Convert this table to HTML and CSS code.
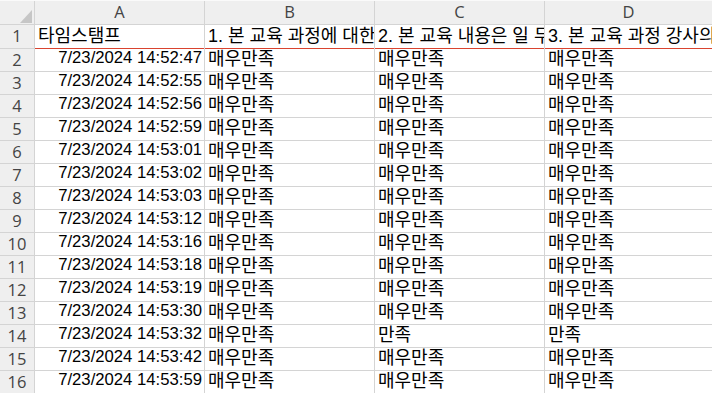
FILE: index.html
```html
<!DOCTYPE html>
<html lang="ko">
<head>
<meta charset="utf-8">
<title>Sheet</title>
<link rel="stylesheet" href="styles.css">
</head>
<body>
<div class="sheet">
  <div class="corner"><svg class="tri" width="12" height="13" viewBox="0 0 12 13"><polygon points="12,0 12,13 0,13" fill="#c6c6c6"/></svg></div>
  <div class="colhead">A</div>
  <div class="colhead">B</div>
  <div class="colhead">C</div>
  <div class="colhead">D</div>

  <div class="rowhead">1</div>
  <div class="cell first">타임스탬프</div>
  <div class="cell first">1. 본 교육 과정에 대한 전반적인 만족도는?</div>
  <div class="cell first">2. 본 교육 내용은 일 무엇보다 도움이 되었습니까?</div>
  <div class="cell first">3. 본 교육 과정 강사의 강의 만족도는?</div>

  <div class="rowhead">2</div><div class="cell num">7/23/2024 14:52:47</div><div class="cell">매우만족</div><div class="cell">매우만족</div><div class="cell">매우만족</div>
  <div class="rowhead">3</div><div class="cell num">7/23/2024 14:52:55</div><div class="cell">매우만족</div><div class="cell">매우만족</div><div class="cell">매우만족</div>
  <div class="rowhead">4</div><div class="cell num">7/23/2024 14:52:56</div><div class="cell">매우만족</div><div class="cell">매우만족</div><div class="cell">매우만족</div>
  <div class="rowhead">5</div><div class="cell num">7/23/2024 14:52:59</div><div class="cell">매우만족</div><div class="cell">매우만족</div><div class="cell">매우만족</div>
  <div class="rowhead">6</div><div class="cell num">7/23/2024 14:53:01</div><div class="cell">매우만족</div><div class="cell">매우만족</div><div class="cell">매우만족</div>
  <div class="rowhead">7</div><div class="cell num">7/23/2024 14:53:02</div><div class="cell">매우만족</div><div class="cell">매우만족</div><div class="cell">매우만족</div>
  <div class="rowhead">8</div><div class="cell num">7/23/2024 14:53:03</div><div class="cell">매우만족</div><div class="cell">매우만족</div><div class="cell">매우만족</div>
  <div class="rowhead">9</div><div class="cell num">7/23/2024 14:53:12</div><div class="cell">매우만족</div><div class="cell">매우만족</div><div class="cell">매우만족</div>
  <div class="rowhead">10</div><div class="cell num">7/23/2024 14:53:16</div><div class="cell">매우만족</div><div class="cell">매우만족</div><div class="cell">매우만족</div>
  <div class="rowhead">11</div><div class="cell num">7/23/2024 14:53:18</div><div class="cell">매우만족</div><div class="cell">매우만족</div><div class="cell">매우만족</div>
  <div class="rowhead">12</div><div class="cell num">7/23/2024 14:53:19</div><div class="cell">매우만족</div><div class="cell">매우만족</div><div class="cell">매우만족</div>
  <div class="rowhead">13</div><div class="cell num">7/23/2024 14:53:30</div><div class="cell">매우만족</div><div class="cell">매우만족</div><div class="cell">매우만족</div>
  <div class="rowhead">14</div><div class="cell num">7/23/2024 14:53:32</div><div class="cell">매우만족</div><div class="cell">만족</div><div class="cell">만족</div>
  <div class="rowhead">15</div><div class="cell num">7/23/2024 14:53:42</div><div class="cell">매우만족</div><div class="cell">매우만족</div><div class="cell">매우만족</div>
  <div class="rowhead">16</div><div class="cell num">7/23/2024 14:53:59</div><div class="cell">매우만족</div><div class="cell">매우만족</div><div class="cell">매우만족</div>
</div>
</body>
</html>
```

FILE: styles.css
```css
html, body {
  margin: 0;
  padding: 0;
  background: #ffffff;
  overflow: hidden;
}

.sheet {
  display: grid;
  grid-template-columns: 34px 169px 169px 169px 1fr;
  grid-template-rows: 23px 23px repeat(15, 22px);
  gap: 1px;
  background: #d4d4d4;
  border-top: 1px solid #fafafa;
  width: 712px;
  height: 392px;
  overflow: hidden;
}

.corner {
  background: #efefef;
  display: flex;
  justify-content: flex-end;
  align-items: flex-end;
  padding: 0 2px 1px 0;
}

.colhead, .rowhead {
  background: #efefef;
  color: #444444;
  font-family: "Open Sans", "Noto Sans", sans-serif;
  font-size: 16.5px;
  display: flex;
  align-items: center;
  justify-content: center;
  line-height: 1;
}

.cell {
  background: #ffffff;
  color: #000000;
  font-family: "Liberation Sans", "Noto Sans CJK KR", sans-serif;
  font-size: 18px;
  line-height: 1;
  white-space: nowrap;
  overflow: hidden;
  display: flex;
  align-items: flex-end;
  padding: 0 2px 3px 3px;
}

.cell.num {
  font-size: 16.7px;
  justify-content: flex-end;
  padding-right: 2px;
  padding-bottom: 4px;
}

.cell.first {
  box-shadow: 0 1px 0 #d9432f;
}
```
